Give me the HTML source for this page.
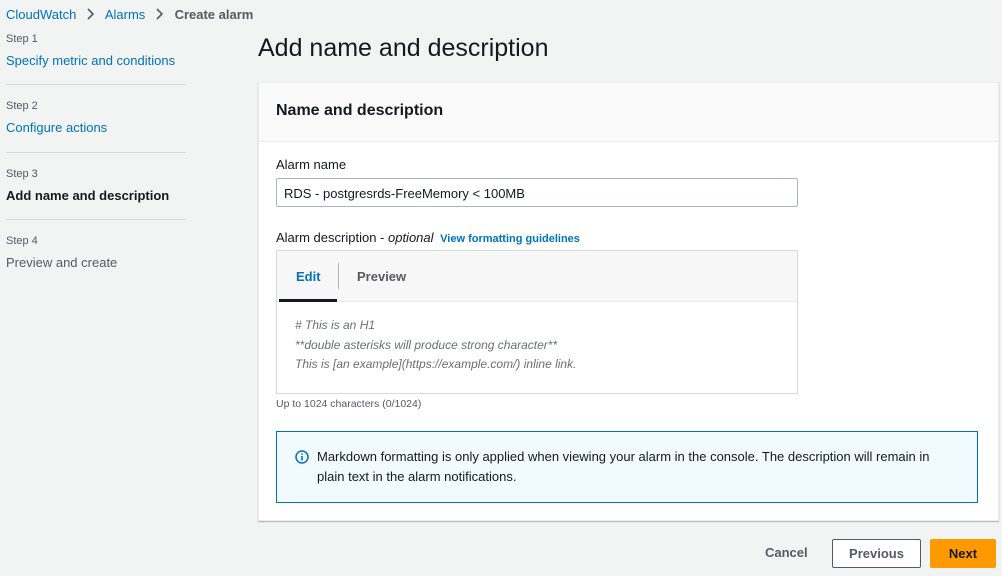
<!DOCTYPE html>
<html><head><meta charset="utf-8"><style>
*{box-sizing:border-box;margin:0;padding:0}
body{width:1002px;height:576px;background:#f2f3f3;font-family:"Liberation Sans",sans-serif;color:#16191f;position:relative;overflow:hidden;font-size:13px}
.a{position:absolute;white-space:nowrap}
.link{color:#0073bb}
.sm{font-size:11px;color:#545b64}
.hr{position:absolute;left:6px;width:180px;height:1px;background:#d5dbdb}
</style></head><body>
<div class="a" style="left:6px;top:7px;font-size:13px"><span class="link">CloudWatch</span>
<svg width="22" height="12" viewBox="0 0 22 12" style="vertical-align:-1px"><path d="M8 1l5 5-5 5" fill="none" stroke="#545b64" stroke-width="1.6"/></svg>
<span class="link">Alarms</span>
<svg width="22" height="12" viewBox="0 0 22 12" style="vertical-align:-1px"><path d="M8 1l5 5-5 5" fill="none" stroke="#545b64" stroke-width="1.6"/></svg>
<b style="color:#545b64">Create alarm</b></div>

<div class="a sm" style="left:6px;top:33px">Step 1</div>
<div class="a link" style="left:6px;top:53px">Specify metric and conditions</div>
<div class="hr" style="top:84px"></div>
<div class="a sm" style="left:6px;top:100px">Step 2</div>
<div class="a link" style="left:6px;top:120px">Configure actions</div>
<div class="hr" style="top:152px"></div>
<div class="a sm" style="left:6px;top:168px">Step 3</div>
<div class="a" style="left:6px;top:188px;font-weight:bold">Add name and description</div>
<div class="hr" style="top:219px"></div>
<div class="a sm" style="left:6px;top:235px">Step 4</div>
<div class="a" style="left:6px;top:255px;color:#545b64">Preview and create</div>

<div class="a" style="left:258px;top:34px;font-size:25px">Add name and description</div>

<div class="a" style="left:258px;top:82px;width:741px;height:439px;background:#fff;border:1px solid #eaeded;box-shadow:0 1px 1px rgba(0,28,36,.3)">
 <div style="height:59px;background:#fafafa;border-bottom:1px solid #eaeded"></div>
</div>
<div class="a" style="left:276px;top:102px;font-size:16px;font-weight:bold">Name and description</div>
<div class="a" style="left:276px;top:157px">Alarm name</div>
<div class="a" style="left:276px;top:178px;width:522px;height:29px;border:1px solid #aab7b8;border-radius:2px;padding:7px 7px;font-size:13px">RDS - postgresrds-FreeMemory &lt; 100MB</div>
<div class="a" style="left:276px;top:230px">Alarm description - <i>optional</i> <b class="link" style="font-size:11px;margin-left:3px">View formatting guidelines</b></div>

<div class="a" style="left:276px;top:250px;width:522px;height:144px;border:1px solid #d5dbdb;background:#fff">
 <div style="height:51px;background:#f7f7f7;border-bottom:1px solid #eaeded;position:relative">
  <div class="a" style="left:19px;top:18px;font-weight:bold;color:#0073bb">Edit</div>
  <div class="a" style="left:61px;top:12px;width:1px;height:26px;background:#aab7b8"></div>
  <div class="a" style="left:80px;top:18px;font-weight:bold;color:#545b64">Preview</div>
  <div class="a" style="left:2px;top:48px;width:58px;height:3px;background:#16191f"></div>
 </div>
 <div style="padding:14px 18px;font-style:italic;color:#687078;font-size:12px;line-height:19.5px">
  # This is an H1<br>**double asterisks will produce strong character**<br>This is [an example](https://example.com/) inline link.
 </div>
</div>
<div class="a sm" style="left:276px;top:398px;font-size:10.5px">Up to 1024 characters (0/1024)</div>

<div class="a" style="left:276px;top:431px;width:702px;height:72px;background:#f1faff;border:1px solid #0073bb"></div>
<svg class="a" style="left:295px;top:450px" width="14" height="14" viewBox="0 0 14 14"><circle cx="7" cy="7" r="6" fill="none" stroke="#0073bb" stroke-width="1.5"/><path d="M7 6v4.5M7 3.5v1.3" stroke="#0073bb" stroke-width="1.6"/></svg>
<div class="a" style="left:317px;top:447px;line-height:20px;white-space:normal;width:640px">Markdown formatting is only applied when viewing your alarm in the console. The description will remain in plain text in the alarm notifications.</div>

<div class="a" style="left:765px;top:545px;font-weight:bold;color:#545b64">Cancel</div>
<div class="a" style="left:832px;top:539px;width:89px;height:29px;border:1px solid #545b64;border-radius:2px;background:#fff;text-align:center;line-height:27px;font-weight:bold;color:#545b64">Previous</div>
<div class="a" style="left:930px;top:539px;width:66px;height:29px;background:#ff9900;border-radius:2px;text-align:center;line-height:29px;font-weight:bold;color:#16191f">Next</div>
</body></html>
